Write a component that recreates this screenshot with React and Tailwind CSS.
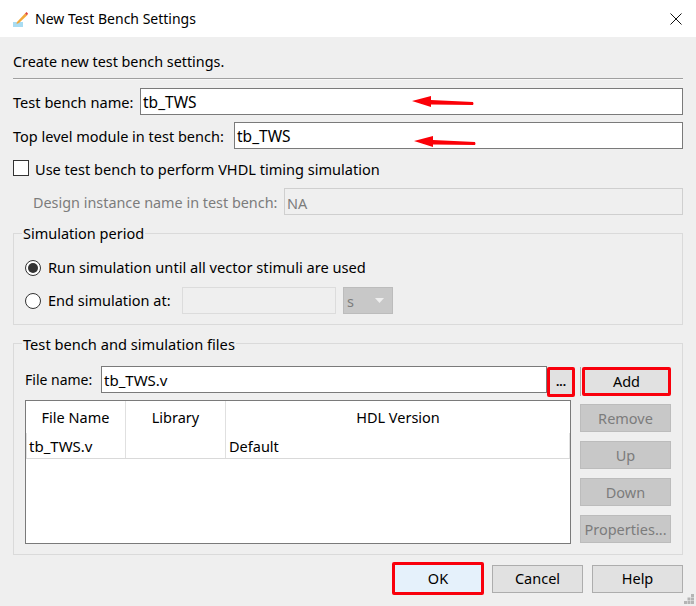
import React from 'react';

const RedArrow = ({ className }) => (
    <svg className={className} width="64" height="14" viewBox="0 0 64 14">
        <path d="M0 6 L19 1 L19 5 L61 7 Q62 9 61 10 L19 9.5 L19 12 Z" fill="#fb0007" />
    </svg>
);

const SideButton = ({ children }) => (
    <div className="flex items-center justify-center w-[91px] h-[28px] bg-[#c8c8c8] border border-[#bcbcbc] text-[#7c7c7c]">
        {children}
    </div>
);

const FooterButton = ({ children }) => (
    <div className="flex items-center justify-center w-[91px] h-[28px] pb-px bg-[#e1e1e1] border border-[#adadad] text-black">
        {children}
    </div>
);

const App = () => {
    return (
        <div className="relative w-[696px] h-[606px] overflow-hidden bg-[#efefef] text-[14.5px] leading-[20px] text-black font-['Noto_Sans',sans-serif]">
            <div className="flex items-center h-[37px] bg-white pl-[13px] pr-[14px] text-[14px]">
                <svg width="16" height="16" viewBox="0 0 16 16" className="mr-[6px]">
                    <rect x="0" y="11" width="10" height="5" fill="#a9dcf2" />
                    <path d="M4 11 L12 2.5 L14 4.5 L6 12 L3.5 13 Z" fill="#f2a93b" />
                    <path d="M12 2.5 L13.5 1 L15 2.5 L14 4.5 Z" fill="#e0453a" />
                </svg>
                <span>New Test Bench Settings</span>
                <svg width="12" height="12" viewBox="0 0 12 12" className="ml-auto">
                    <path d="M0.5 0.5 L11.5 11.5 M11.5 0.5 L0.5 11.5" stroke="#111" strokeWidth="1" fill="none" />
                </svg>
            </div>

            <div className="flex flex-col px-[13px]">
                <div className="mt-[15px] h-[20px] text-[14.35px]">Create new test bench settings.</div>
                <div className="mt-[6px] h-[2px] border-t border-[#a0a0a0] bg-[#f8f8f8]" />

                <div className="mt-[8px] flex items-center h-[27px]">
                    <span className="w-[127px] shrink-0 pt-px text-[14.6px]">Test bench name:</span>
                    <div className="flex-1 h-full flex items-center bg-white border border-[#7a7a7a] px-[2px] text-[15.5px]">tb_TWS</div>
                </div>
                <div className="mt-[7px] flex items-center h-[27px]">
                    <span className="w-[221px] shrink-0 pt-px">Top level module in test bench:</span>
                    <div className="flex-1 h-full flex items-center bg-white border border-[#7a7a7a] px-[2px] text-[15.5px]">tb_TWS</div>
                </div>

                <div className="mt-[11px] flex items-center h-[15px]">
                    <div className="w-[16px] h-[16px] bg-white border border-[#333333] shrink-0" />
                    <span className="ml-[6px] pt-[3px] text-[14.55px]">Use test bench to perform VHDL timing simulation</span>
                </div>

                <div className="mt-[13px] flex items-center h-[27px] pl-[20px]">
                    <span className="w-[251px] shrink-0 pt-[3px] text-[#7c7c7c] text-[14.4px]">Design instance name in test bench:</span>
                    <div className="flex-1 h-full flex items-center bg-[#efefef] border border-[#cfcfcf] px-[2px] pt-[3px] text-[#7c7c7c]">NA</div>
                </div>

                <fieldset className="mt-[9px] border border-[#dadada]">
                    <legend className="ml-[8px] px-px h-[19px] leading-[18px]">Simulation period</legend>
                    <div className="px-[11px] pb-[10px]">
                        <div className="mt-[15px] flex items-center h-[20px]">
                            <div className="flex items-center justify-center w-[16px] h-[16px] rounded-full bg-white border border-[#333333] shrink-0">
                                <div className="w-[10px] h-[10px] rounded-full bg-[#333333]" />
                            </div>
                            <span className="ml-[7px] pb-[2px] text-[14.65px]">Run simulation until all vector stimuli are used</span>
                        </div>
                        <div className="mt-[9px] flex items-center h-[27px]">
                            <div className="w-[16px] h-[16px] rounded-full bg-white border border-[#333333] shrink-0" />
                            <span className="ml-[7px] w-[134px] shrink-0 pb-[2px]">End simulation at:</span>
                            <div className="w-[154px] h-full bg-[#efefef] border border-[#dcdcdc]" />
                            <div className="ml-[7px] w-[50px] h-full flex items-center justify-between bg-[#c8c8c8] border border-[#bcbcbc] pl-[3px] pr-[8px] text-[#7c7c7c]">
                                <span>s</span>
                                <svg width="9" height="5" viewBox="0 0 9 5"><path d="M0 0 H9 L4.5 5 Z" fill="#efefef" /></svg>
                            </div>
                        </div>
                    </div>
                </fieldset>

                <fieldset className="mt-[9px] border border-[#dadada]">
                    <legend className="ml-[8px] px-px h-[19px] leading-[20px] text-[14.65px]">Test bench and simulation files</legend>
                    <div className="px-[11px] pb-[10px]">
                        <div className="mt-[13px] flex items-start h-[34px]">
                            <span className="w-[76px] shrink-0 h-[27px] flex items-center text-[14px]">File name:</span>
                            <div className="w-[446px] h-[27px] flex items-center bg-white border border-[#7a7a7a] px-[2px] text-[15px]">tb_TWS.v</div>
                            <div className="mt-px w-[28px] h-[30px] flex items-center justify-center bg-[#e1e1e1] border-[3px] border-[#f9000c] rounded-[2px] font-bold text-[12px]">...</div>
                            <div className="ml-[5px] mt-px pl-px border-l border-[#adadad]">
                                <div className="w-[89px] h-[29px] pb-[2px] flex items-center justify-center bg-[#e1e1e1] border-[3px] border-[#f9000c] rounded-[2px]">Add</div>
                            </div>
                        </div>
                        <div className="flex items-start justify-between">
                            <div className="w-[546px] h-[144px] bg-white border border-[#7a7a7a]">
                                <div className="flex h-[32px] text-center">
                                    <div className="w-[100px] flex items-center justify-center border-r border-[#e0e0e0]">File Name</div>
                                    <div className="w-[100px] flex items-center justify-center border-r border-[#e0e0e0]">Library</div>
                                    <div className="flex-1 flex items-center justify-center">HDL Version</div>
                                </div>
                                <div className="flex h-[26px] border-b border-[#d9d9d9]">
                                    <div className="w-[100px] flex items-center pl-[2px] pt-px border-r border-l border-[#e0e0e0] text-[15px]">tb_TWS.v</div>
                                    <div className="w-[100px] border-r border-[#e0e0e0]" />
                                    <div className="flex-1 flex items-center pl-[3px] pt-px border-r border-[#e0e0e0]">Default</div>
                                </div>
                            </div>
                            <div className="flex flex-col gap-[9px] pt-[4px]">
                                <SideButton>Remove</SideButton>
                                <SideButton>Up</SideButton>
                                <SideButton>Down</SideButton>
                                <SideButton>Properties...</SideButton>
                            </div>
                        </div>
                    </div>
                </fieldset>

                <div className="mt-[7px] flex items-center justify-end h-[33px] gap-[8px]">
                    <div className="w-[92px] h-[33px] pb-[2px] flex items-center justify-center bg-[#e5f1fb] border-[3px] border-[#f9000c] rounded-[2px]">OK</div>
                    <FooterButton>Cancel</FooterButton>
                    <div className="ml-px"><FooterButton>Help</FooterButton></div>
                </div>
            </div>

            <RedArrow className="absolute left-[412px] top-[95px]" />
            <RedArrow className="absolute left-[414px] top-[135px]" />

            <svg className="absolute right-[2px] bottom-[2px]" width="10" height="10" viewBox="0 0 10 10">
                <g fill="#b4b4b4">
                    <rect x="7" y="0" width="3" height="3" />
                    <rect x="3.5" y="3.5" width="3" height="3" />
                    <rect x="7" y="3.5" width="3" height="3" />
                    <rect x="0" y="7" width="3" height="3" />
                    <rect x="3.5" y="7" width="3" height="3" />
                    <rect x="7" y="7" width="3" height="3" />
                </g>
            </svg>
        </div>
    );
};

export default App;
